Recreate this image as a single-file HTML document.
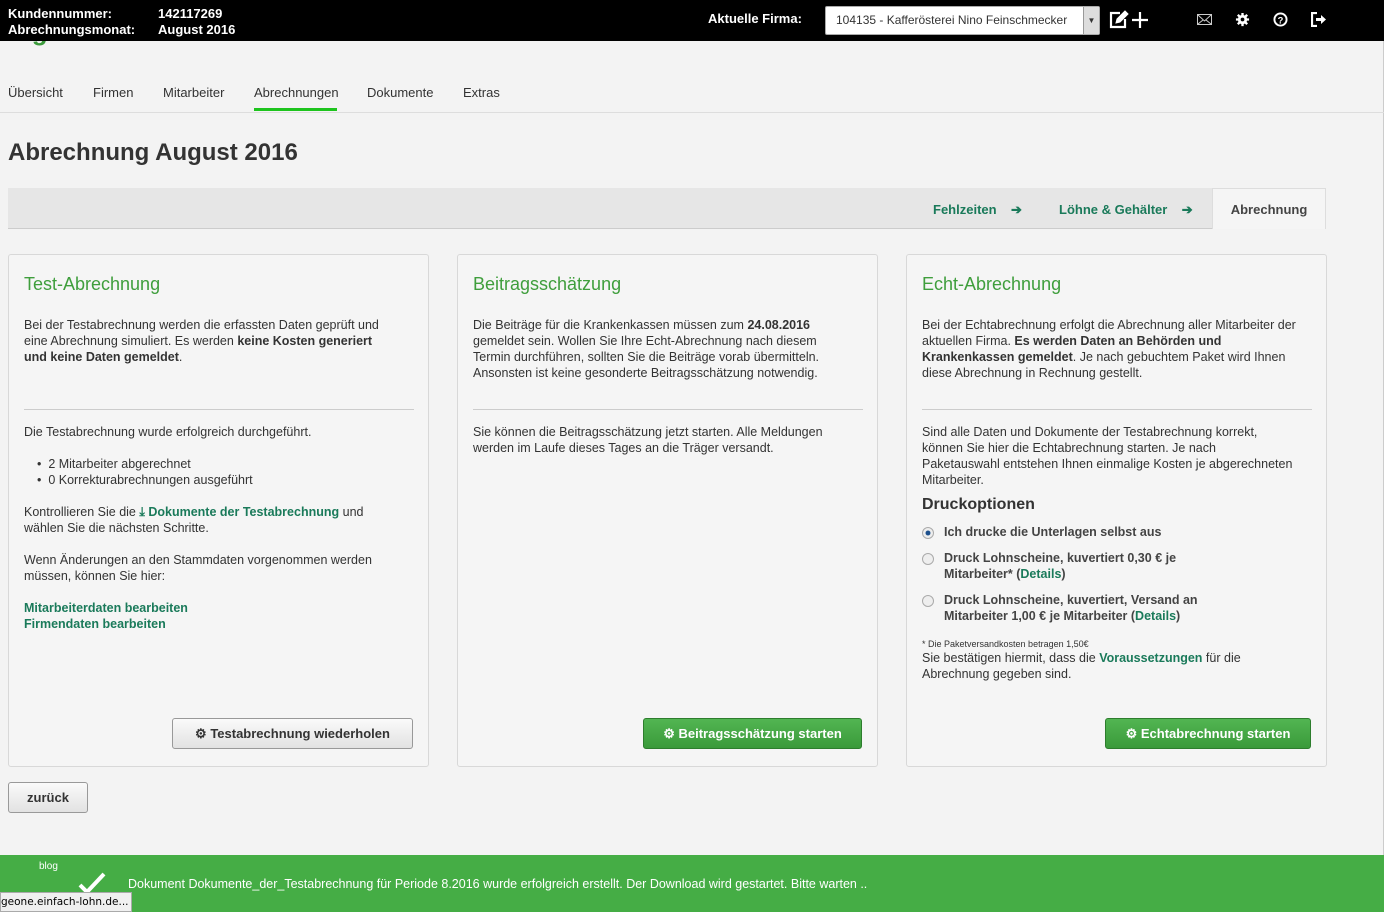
<!DOCTYPE html>
<html style="overflow:hidden;height:912px"><head><meta charset="utf-8"><style>
*{box-sizing:border-box;margin:0;padding:0}
body{width:1384px;height:912px;overflow:hidden;background:#f3f3f3;font-family:"Liberation Sans",Arial,sans-serif;color:#333;font-size:12.5px;position:relative;border-right:1px solid #ccc}
.abs{position:absolute}
.top{left:0;top:0;width:1384px;height:41px;background:#000;color:#fff;font-weight:bold;font-size:13px}
.nav a{position:absolute;top:85px;font-size:13px;color:#333;text-decoration:none}
.card{position:absolute;top:254px;width:421px;height:513px;background:#f5f5f5;border:1px solid #d8d8d8;border-radius:3px}
.card h2{position:absolute;left:15px;top:19px;font-size:18px;font-weight:normal;color:#3f9e3c}
.card p{position:absolute;left:15px;width:374px;line-height:16px}
.card hr{position:absolute;left:15px;top:154px;width:390px;border:0;border-top:1px solid #ccc}
.g{color:#1a7a5a;font-weight:bold}
.btn{position:absolute;height:31px;border-radius:3px;font-weight:bold;font-size:13px;text-align:center;line-height:29px}
.gb{background:linear-gradient(#52b552,#3a9a3a);border:1px solid #2d7d2d;color:#fff}
.wb{background:linear-gradient(#fafafa,#e2e2e2);border:1px solid #999;color:#333}
.radio{position:absolute;left:15px;width:12px;height:12px;border-radius:50%;border:1px solid #aaa;background:#eee}
</style></head><body>
<div class="abs" style="left:0;top:16px;font-size:26px;color:#3c9a3c;font-weight:bold;">Sage <span style="color:#666;font-weight:normal">One Lohn & Gehalt</span></div>
<div class="abs top">
<div class="abs" style="left:8px;top:6px">Kundennummer:</div>
<div class="abs" style="left:158px;top:6px">142117269</div>
<div class="abs" style="left:8px;top:22px">Abrechnungsmonat:</div>
<div class="abs" style="left:158px;top:22px">August 2016</div>
<div class="abs" style="left:708px;top:11px">Aktuelle Firma:</div>
<div class="abs" style="left:825px;top:6px;width:275px;height:29px;background:#fff;border:1px solid #aaa;border-radius:2px;color:#333;font-weight:normal;font-size:12px;line-height:27px;padding-left:10px;white-space:nowrap">104135 - Kafferösterei Nino Feinschmecker
<div class="abs" style="right:0;top:0;width:16px;height:27px;background:#ddd;border-left:1px solid #999;font-size:8px;text-align:center">▼</div></div>
<svg class="abs" style="left:1108px;top:9px" width="42" height="22" viewBox="0 0 42 22" fill="none" stroke="#fff" stroke-width="2.2"><path d="M12 4H3v14h14v-8"/><path d="M8 14l1-4 8-8 3 3-8 8z" fill="#fff" stroke-width="1"/><path d="M32 3v16M24 11h16"/></svg>
<svg class="abs" style="left:1197px;top:14px" width="15" height="11" viewBox="0 0 15 11" fill="none" stroke="#ccc"><rect x="0.5" y="0.5" width="14" height="10"/><path d="M1 1l6.5 6L14 1M1 10l5-4M14 10l-5-4"/></svg>
<svg class="abs" style="left:1235px;top:12px" width="15" height="15" viewBox="0 0 16 16"><circle cx="8" cy="8" r="5" fill="#fff"/><g stroke="#fff" stroke-width="2.5"><path d="M8 1v14M1 8h14M3 3l10 10M13 3L3 13"/></g><circle cx="8" cy="8" r="2" fill="#000"/></svg>
<svg class="abs" style="left:1273px;top:12px" width="15" height="15" viewBox="0 0 16 16"><circle cx="8" cy="8" r="6.5" fill="none" stroke="#fff" stroke-width="2"/><text x="8" y="12" font-size="10" font-weight="bold" fill="#fff" text-anchor="middle" font-family="Liberation Sans">?</text></svg>
<svg class="abs" style="left:1311px;top:12px" width="16" height="15" viewBox="0 0 16 15"><path d="M6 1H1v13h5" fill="none" stroke="#fff" stroke-width="2.2"/><path d="M5 6h5V3l5 4.5-5 4.5V9H5z" fill="#fff"/></svg>
</div>
<div class="nav">
<a style="left:8px">Übersicht</a><a style="left:93px">Firmen</a><a style="left:163px">Mitarbeiter</a><a style="left:254px">Abrechnungen</a><a style="left:367px">Dokumente</a><a style="left:463px">Extras</a>
</div>
<div class="abs" style="left:254px;top:108px;width:83px;height:3px;background:#1ec41e"></div>
<div class="abs" style="left:0;top:112px;width:1384px;height:1px;background:#ddd"></div>
<div class="abs" style="left:8px;top:139px;font-size:24px;font-weight:bold;color:#333">Abrechnung August 2016</div>
<div class="abs" style="left:8px;top:188px;width:1318px;height:41px;background:#e6e6e6;border-bottom:1px solid #ccc"></div>
<div class="abs g" style="left:933px;top:202px;font-size:13px">Fehlzeiten &nbsp;&nbsp; ➔</div>
<div class="abs g" style="left:1059px;top:202px;font-size:13px">Löhne &amp; Gehälter &nbsp;&nbsp; ➔</div>
<div class="abs" style="left:1212px;top:188px;width:114px;height:41px;background:#f5f5f5;border:1px solid #ddd;border-bottom:0;font-weight:bold;font-size:13px;text-align:center;line-height:42px;color:#444">Abrechnung</div>

<div class="card" style="left:8px">
<h2>Test-Abrechnung</h2>
<p style="top:62px">Bei der Testabrechnung werden die erfassten Daten geprüft und eine Abrechnung simuliert. Es werden <b>keine Kosten generiert und keine Daten gemeldet</b>.</p>
<hr>
<p style="top:169px">Die Testabrechnung wurde erfolgreich durchgeführt.</p>
<p style="top:201px;left:28px">•&nbsp; 2 Mitarbeiter abgerechnet<br>•&nbsp; 0 Korrekturabrechnungen ausgeführt</p>
<p style="top:249px">Kontrollieren Sie die <span class="g">⤓ Dokumente der Testabrechnung</span> und wählen Sie die nächsten Schritte.</p>
<p style="top:297px">Wenn Änderungen an den Stammdaten vorgenommen werden müssen, können Sie hier:</p>
<p style="top:345px" class="g">Mitarbeiterdaten bearbeiten<br>Firmendaten bearbeiten</p>
<div class="btn wb" style="left:163px;top:463px;width:241px">⚙ Testabrechnung wiederholen</div>
</div>

<div class="card" style="left:457px">
<h2>Beitragsschätzung</h2>
<p style="top:62px">Die Beiträge für die Krankenkassen müssen zum <b>24.08.2016</b> gemeldet sein. Wollen Sie Ihre Echt-Abrechnung nach diesem Termin durchführen, sollten Sie die Beiträge vorab übermitteln. Ansonsten ist keine gesonderte Beitragsschätzung notwendig.</p>
<hr>
<p style="top:169px">Sie können die Beitragsschätzung jetzt starten. Alle Meldungen werden im Laufe dieses Tages an die Träger versandt.</p>
<div class="btn gb" style="left:185px;top:463px;width:219px">⚙ Beitragsschätzung starten</div>
</div>

<div class="card" style="left:906px">
<h2>Echt-Abrechnung</h2>
<p style="top:62px;width:390px">Bei der Echtabrechnung erfolgt die Abrechnung aller Mitarbeiter der aktuellen Firma. <b>Es werden Daten an Behörden und Krankenkassen gemeldet</b>. Je nach gebuchtem Paket wird Ihnen diese Abrechnung in Rechnung gestellt.</p>
<hr>
<p style="top:169px;width:390px">Sind alle Daten und Dokumente der Testabrechnung korrekt,<br>können Sie hier die Echtabrechnung starten. Je nach<br>Paketauswahl entstehen Ihnen einmalige Kosten je abgerechneten<br>Mitarbeiter.</p>
<p style="top:242px;font-size:16px;font-weight:bold">Druckoptionen</p>
<div class="radio" style="top:272px;background:radial-gradient(#1c4f8c 30%,#eee 40%)"></div>
<p style="top:269px;left:37px;font-weight:bold;color:#444">Ich drucke die Unterlagen selbst aus</p>
<div class="radio" style="top:298px"></div>
<p style="top:295px;left:37px;width:280px;font-weight:bold;color:#444">Druck Lohnscheine, kuvertiert 0,30 € je Mitarbeiter* (<span class="g">Details</span>)</p>
<div class="radio" style="top:340px"></div>
<p style="top:337px;left:37px;width:290px;font-weight:bold;color:#444">Druck Lohnscheine, kuvertiert, Versand an Mitarbeiter 1,00 € je Mitarbeiter (<span class="g">Details</span>)</p>
<p style="top:381px;font-size:9px">* Die Paketversandkosten betragen 1,50€</p>
<p style="top:395px;width:345px">Sie bestätigen hiermit, dass die <span class="g">Voraussetzungen</span> für die Abrechnung gegeben sind.</p>
<div class="btn gb" style="left:198px;top:463px;width:206px">⚙ Echtabrechnung starten</div>
</div>

<div class="btn wb" style="left:8px;top:782px;width:80px;height:31px">zurück</div>

<div class="abs" style="left:0;top:855px;width:1384px;height:57px;background:#45ad45;color:#fff">
<div class="abs" style="left:39px;top:6px;font-size:10px">blog</div>
<svg class="abs" style="left:78px;top:16px" width="28" height="24" viewBox="0 0 28 24"><path d="M2 14l7 7L26 3" fill="none" stroke="#fff" stroke-width="4"/></svg>
<div class="abs" style="left:128px;top:22px;font-size:12.5px;white-space:nowrap">Dokument Dokumente_der_Testabrechnung für Periode 8.2016 wurde erfolgreich erstellt. Der Download wird gestartet. Bitte warten ..</div>
</div>
<div class="abs" style="left:0;top:892px;width:132px;height:20px;background:#f0f0f0;border:1px solid #aaa;font-family:'DejaVu Sans',sans-serif;font-size:10.5px;line-height:18px;color:#000;white-space:nowrap;overflow:hidden">geone.einfach-lohn.de...</div>
</body></html>
